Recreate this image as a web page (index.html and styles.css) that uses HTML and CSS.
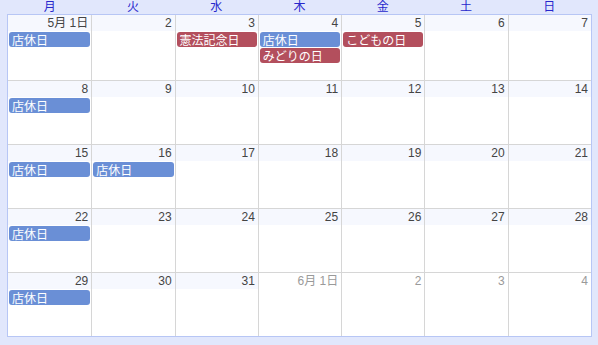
FILE: index.html
```html
<!DOCTYPE html>
<html lang="ja">
<head>
<meta charset="utf-8">
<link rel="stylesheet" href="styles.css">
</head>
<body>
<div class="cal">
  <div class="head">
    <div class="dn">月</div><div class="dn">火</div><div class="dn">水</div><div class="dn">木</div><div class="dn">金</div><div class="dn">土</div><div class="dn">日</div>
  </div>
  <div class="grid">
    <div class="row">
      <div class="cell"><div class="num">5月 1日</div><div class="ev blue">店休日</div></div>
      <div class="cell"><div class="num">2</div></div>
      <div class="cell"><div class="num">3</div><div class="ev red">憲法記念日</div></div>
      <div class="cell"><div class="num">4</div><div class="ev blue">店休日</div><div class="ev red">みどりの日</div></div>
      <div class="cell"><div class="num">5</div><div class="ev red">こどもの日</div></div>
      <div class="cell"><div class="num">6</div></div>
      <div class="cell"><div class="num">7</div></div>
    </div>
    <div class="row">
      <div class="cell"><div class="num">8</div><div class="ev blue">店休日</div></div>
      <div class="cell"><div class="num">9</div></div>
      <div class="cell"><div class="num">10</div></div>
      <div class="cell"><div class="num">11</div></div>
      <div class="cell"><div class="num">12</div></div>
      <div class="cell"><div class="num">13</div></div>
      <div class="cell"><div class="num">14</div></div>
    </div>
    <div class="row">
      <div class="cell"><div class="num">15</div><div class="ev blue">店休日</div></div>
      <div class="cell"><div class="num">16</div><div class="ev blue">店休日</div></div>
      <div class="cell"><div class="num">17</div></div>
      <div class="cell"><div class="num">18</div></div>
      <div class="cell"><div class="num">19</div></div>
      <div class="cell"><div class="num">20</div></div>
      <div class="cell"><div class="num">21</div></div>
    </div>
    <div class="row">
      <div class="cell"><div class="num">22</div><div class="ev blue">店休日</div></div>
      <div class="cell"><div class="num">23</div></div>
      <div class="cell"><div class="num">24</div></div>
      <div class="cell"><div class="num">25</div></div>
      <div class="cell"><div class="num">26</div></div>
      <div class="cell"><div class="num">27</div></div>
      <div class="cell"><div class="num">28</div></div>
    </div>
    <div class="row">
      <div class="cell"><div class="num">29</div><div class="ev blue">店休日</div></div>
      <div class="cell"><div class="num">30</div></div>
      <div class="cell"><div class="num">31</div></div>
      <div class="cell other"><div class="num">6月 1日</div></div>
      <div class="cell other"><div class="num">2</div></div>
      <div class="cell other"><div class="num">3</div></div>
      <div class="cell other"><div class="num">4</div></div>
    </div>
  </div>
</div>
</body>
</html>
```
FILE: styles.css
```css
html, body {
  margin: 0;
  padding: 0;
  background: #e1e7fc;
  font-family: "Liberation Sans", "Noto Sans CJK JP", sans-serif;
  font-size: 12px;
}
.cal {
  margin-left: 7px;
  width: 585px;
}
.head {
  display: grid;
  grid-template-columns: repeat(7, 1fr);
  height: 14px;
  padding: 0 1px;
  border-bottom: 1px solid #b7c6f5;
}
.dn {
  box-sizing: border-box;
  height: 14px;
  padding-top: 1px;
  text-align: center;
  color: #2727cc;
  font-family: "Liberation Sans", "Noto Sans CJK JP", sans-serif;
  font-size: 12px;
  line-height: 13px;
}
.grid {
  display: grid;
  grid-template-rows: 65px 64px 64px 64px 64px;
  border: 1px solid #b7c6f5;
  border-top: none;
  background: #fff;
}
.row {
  display: grid;
  grid-template-columns: repeat(7, 1fr);
  border-top: 1px solid #d6d6d6;
}
.row:first-child {
  border-top: none;
}
.cell {
  border-left: 1px solid #d6d6d6;
  display: flex;
  flex-direction: column;
  gap: 1px;
  min-width: 0;
}
.cell:first-child {
  border-left: none;
}
.num {
  height: 16px;
  line-height: 16px;
  background: #f6f8fe;
  color: #444;
  text-align: right;
  padding-right: 3px;
  font-family: "Liberation Sans", "Noto Sans CJK JP", sans-serif;
  font-size: 12px;
}
.other .num {
  background: #fff;
  color: #9a9a9a;
}
.ev {
  height: 15px;
  line-height: 15px;
  margin: 0 1px 0 1px;
  border-radius: 3px;
  color: #fff;
  padding-left: 3px;
  font-family: "Noto Sans CJK JP", sans-serif;
  font-size: 12px;
  white-space: nowrap;
  overflow: hidden;
}
.blue {
  background: #6a8fd6;
}
.red {
  background: #b34f5d;
}
```
